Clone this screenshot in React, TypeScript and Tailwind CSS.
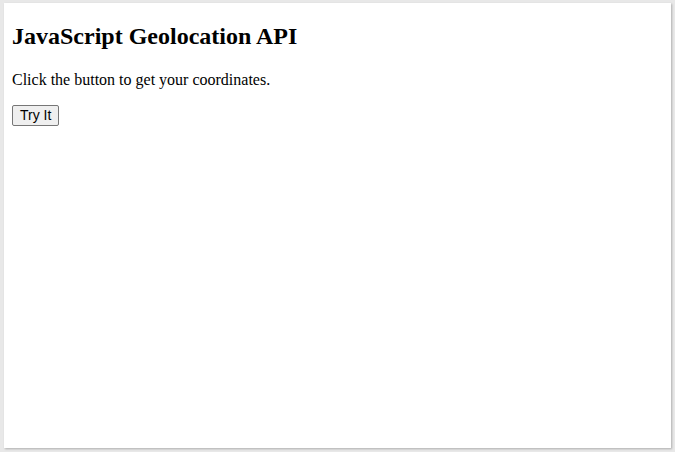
export default function App() {
  return (
    <div className="w-[675px] h-[452px] bg-[#e8e8e8] pt-[3px] pl-[4px] overflow-hidden">
      <div className="w-[667px] h-[445px] bg-white shadow-[1px_1px_2px_rgba(0,0,0,0.25)] pt-[20px] pl-[8px] flex flex-col items-start font-['Liberation_Serif',serif] text-black">
        <h2 className="text-[24px] font-bold leading-[27.6px]">JavaScript Geolocation API</h2>
        <p className="mt-[20px] text-[16px] leading-[18.4px]">Click the button to get your coordinates.</p>
        <button className="mt-[16px] font-['Liberation_Sans',Arial,sans-serif] text-[14px] leading-[15px] px-[7px] pt-[2px] pb-[2px] h-[21px] border border-[#767676] rounded-[2px] bg-[#efefef] text-black">
          Try It
        </button>
      </div>
    </div>
  );
}
